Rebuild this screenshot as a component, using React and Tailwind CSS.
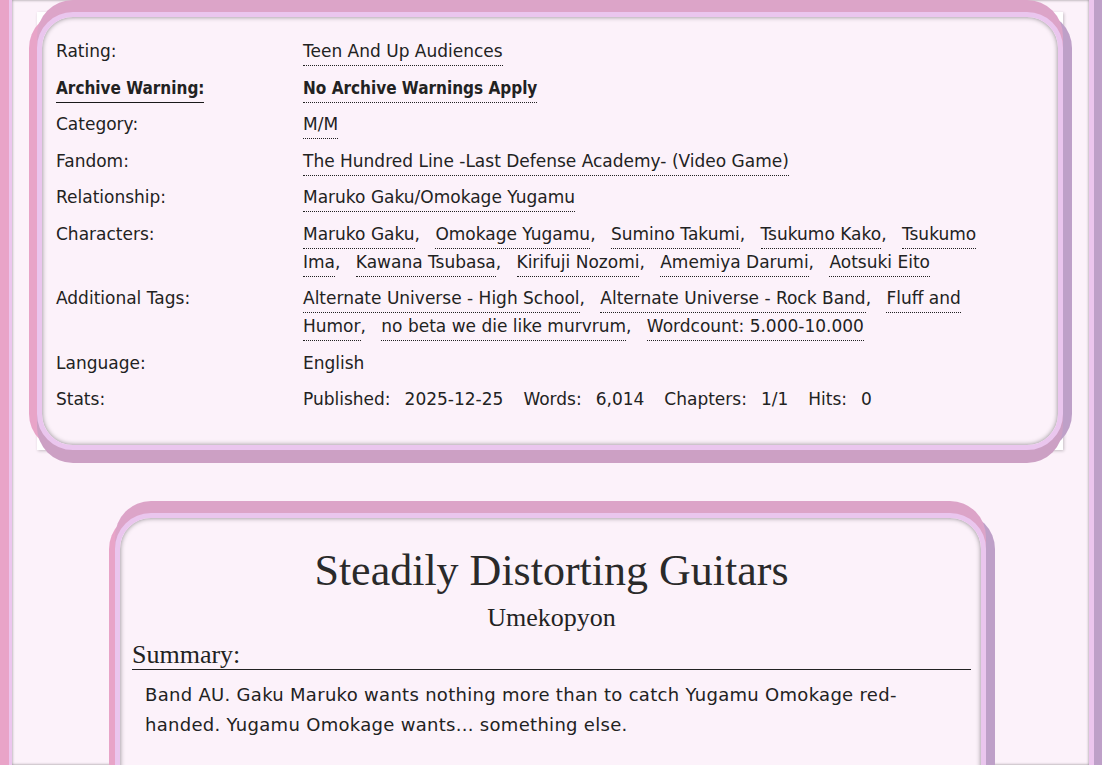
import React from "react";

const sans = { fontFamily: '"DejaVu Sans", "Liberation Sans", sans-serif' };
const sansBold = { fontFamily: '"DejaVu Sans Condensed", "Noto Sans", sans-serif' };
const serif = { fontFamily: '"Liberation Serif", "DejaVu Serif", serif' };

const characters = [
  "Maruko Gaku",
  "Omokage Yugamu",
  "Sumino Takumi",
  "Tsukumo Kako",
  "Tsukumo Ima",
  "Kawana Tsubasa",
  "Kirifuji Nozomi",
  "Amemiya Darumi",
  "Aotsuki Eito",
];

const freeforms = [
  "Alternate Universe - High School",
  "Alternate Universe - Rock Band",
  "Fluff and Humor",
  "no beta we die like murvrum",
  "Wordcount: 5.000-10.000",
];

function Tags({ items, bold = false }) {
  return (
    <ul className="inline">
      {items.map((t, i) => (
        <React.Fragment key={t}>
          <li className="inline mr-[10px]">
            <a
              className={
                bold
                  ? "border-b border-dotted border-[#222] pb-[4px] font-bold"
                  : "border-b border-dotted border-[#222] pb-[4px]"
              }
              style={bold ? sansBold : undefined}
            >
              {t}
            </a>
            {i < items.length - 1 && ","}
          </li>{" "}
        </React.Fragment>
      ))}
    </ul>
  );
}

function Stat({ label, value, first }) {
  return (
    <>
      <span className={first ? "" : "ml-[20px]"}>{label}</span>
      <span className="ml-[14px]">{value}</span>
    </>
  );
}

function WorkMeta() {
  return (
    <div className="mx-[25px] mr-[26px] bg-white shadow-[1px_1px_3px_rgba(0,0,0,0.22)]">
      <dl className="grid grid-cols-[247px_1fr] gap-y-[8.5px] rounded-[36px] border-[5px] border-[#eac6ee] bg-[#fcf2fa] pl-[14px] pr-[48px] pt-[20px] pb-[32px] text-[17px] leading-[28px] text-[#222] shadow-[inset_0_0_5px_rgba(0,0,0,0.45),0_-12px_0_#dca4c8,0_13px_0_#cca0c4,-8px_0_0_#e8a4c8,9px_0_0_#bea0c8]">
        <dt>Rating:</dt>
        <dd>
          <Tags items={["Teen And Up Audiences"]} />
        </dd>

        <dt>
          <span className="border-b border-[#1a1a1a] pb-[4px] font-bold" style={sansBold}>
            Archive Warning:
          </span>
        </dt>
        <dd>
          <Tags items={["No Archive Warnings Apply"]} bold />
        </dd>

        <dt>Category:</dt>
        <dd>
          <Tags items={["M/M"]} />
        </dd>

        <dt>Fandom:</dt>
        <dd>
          <Tags items={["The Hundred Line -Last Defense Academy- (Video Game)"]} />
        </dd>

        <dt>Relationship:</dt>
        <dd>
          <Tags items={["Maruko Gaku/Omokage Yugamu"]} />
        </dd>

        <dt>Characters:</dt>
        <dd>
          <Tags items={characters} />
        </dd>

        <dt>Additional Tags:</dt>
        <dd>
          <Tags items={freeforms} />
        </dd>

        <dt>Language:</dt>
        <dd>English</dd>

        <dt>Stats:</dt>
        <dd>
          <Stat label="Published:" value="2025-12-25" first />
          <Stat label="Words:" value="6,014" />
          <Stat label="Chapters:" value="1/1" />
          <Stat label="Hits:" value="0" />
        </dd>
      </dl>
    </div>
  );
}

function Preface() {
  return (
    <div className="mx-auto mt-[63px] w-[871px] rounded-[36px] border-[5px] border-[#eac6ee] bg-[#fcf2fa] px-[12px] pr-[10px] pt-[27px] pb-[60px] text-[#222] shadow-[inset_0_0_5px_rgba(0,0,0,0.45),0_-12px_0_#dca4c8,-6px_0_0_#e8a4c8,9px_0_0_#bea0c8]">
      <h2 className="text-center text-[44px] leading-[52.8px] text-[#2a2a2a]" style={serif}>
        Steadily Distorting Guitars
      </h2>
      <h3 className="mt-[4px] text-center text-[26px] leading-[31.2px]" style={serif}>
        Umekopyon
      </h3>
      <h3
        className="mt-[8px] border-b border-[#222] text-[26px] leading-[28px]"
        style={serif}
      >
        Summary:
      </h3>
      <blockquote
        className="ml-[13px] mr-[60px] mt-[10px] text-[18px] leading-[30px] tracking-[0.3px]"
        style={sans}
      >
        Band AU. Gaku Maruko wants nothing more than to catch Yugamu Omokage red-handed.
        Yugamu Omokage wants... something else.
      </blockquote>
    </div>
  );
}

export default function App() {
  return (
    <div className="flex h-[765px] overflow-hidden bg-[#fcf2fa]" style={sans}>
      <div className="flex flex-1 border-l-[9px] border-r-[8px] border-l-[#e9a4c8] border-r-[#bea0c8]">
        <div className="flex-1 border-l-[3px] border-r-[5px] border-[#ecc6ee] bg-[#fcf2fa] pt-[12px] shadow-[inset_0_0_3px_rgba(0,0,0,0.45)]">
          <WorkMeta />
          <Preface />
        </div>
      </div>
    </div>
  );
}
